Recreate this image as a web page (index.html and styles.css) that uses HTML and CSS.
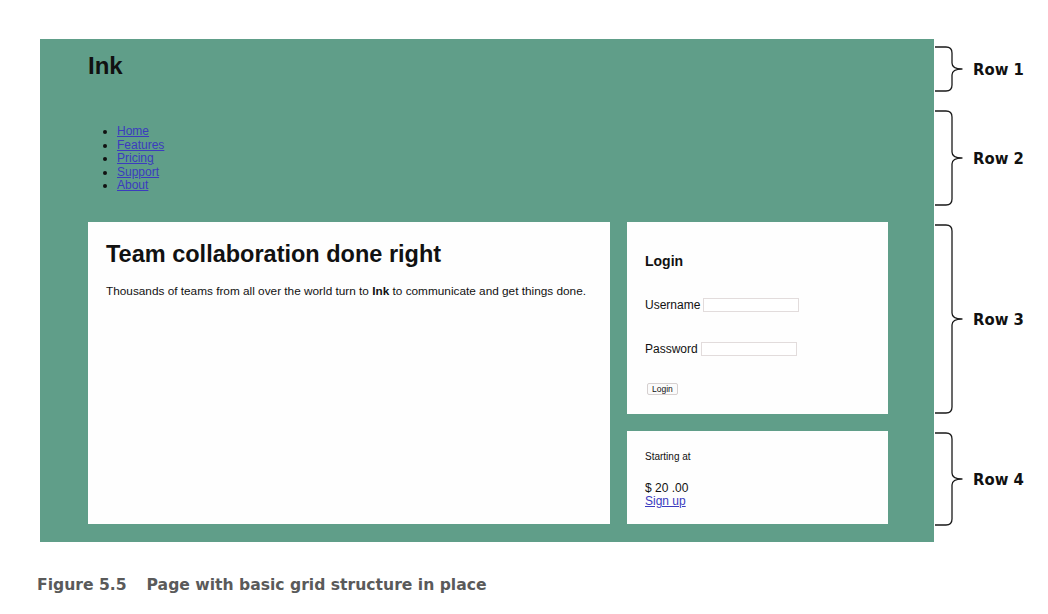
FILE: index.html
```html
<!DOCTYPE html>
<html lang="en">
<head>
<meta charset="utf-8">
<title>Figure 5.5</title>
<link rel="stylesheet" href="styles.css">
</head>
<body>
<div class="figure">
  <div class="stage">
    <div class="site">
      <header class="brand"><h1>Ink</h1></header>
      <nav class="nav">
        <ul>
          <li><a href="#">Home</a></li>
          <li><a href="#">Features</a></li>
          <li><a href="#">Pricing</a></li>
          <li><a href="#">Support</a></li>
          <li><a href="#">About</a></li>
        </ul>
      </nav>
      <main class="card hero">
        <h2>Team collaboration done right</h2>
        <p>Thousands of teams from all over the world turn to <strong>Ink</strong> to communicate and get things done.</p>
      </main>
      <section class="card login">
        <h3>Login</h3>
        <p class="field">Username <input type="text" class="input"></p>
        <p class="field">Password <input type="password" class="input"></p>
        <p class="actions"><button class="btn" type="button">Login</button></p>
      </section>
      <section class="card pricing">
        <p class="small">Starting at</p>
        <p class="price">$ 20 .00</p>
        <a href="#" class="signup">Sign up</a>
      </section>
    </div>
    <div class="notes">
      <div class="note">
        <svg class="brace" width="30" height="46" viewBox="0 0 30 46"><path d="M0 1 H11 Q17 1 17 7 V17 Q17 23 27 23 Q17 23 17 29 V39 Q17 45 11 45 H0"/></svg>
        <span class="label">Row 1</span>
      </div>
      <div class="note">
        <svg class="brace" width="30" height="96" viewBox="0 0 30 96"><path d="M0 1 H11 Q17 1 17 7 V42 Q17 48 27 48 Q17 48 17 54 V89 Q17 95 11 95 H0"/></svg>
        <span class="label">Row 2</span>
      </div>
      <div class="note">
        <svg class="brace" width="30" height="190" viewBox="0 0 30 190"><path d="M0 1 H11 Q17 1 17 7 V89 Q17 95 27 95 Q17 95 17 101 V183 Q17 189 11 189 H0"/></svg>
        <span class="label">Row 3</span>
      </div>
      <div class="note">
        <svg class="brace" width="30" height="94" viewBox="0 0 30 94"><path d="M0 1 H11 Q17 1 17 7 V41 Q17 47 27 47 Q17 47 17 53 V87 Q17 93 11 93 H0"/></svg>
        <span class="label">Row 4</span>
      </div>
    </div>
  </div>
  <p class="caption"><span class="fig-num">Figure 5.5</span>Page with basic grid structure in place</p>
</div>
</body>
</html>
```

FILE: styles.css
```css
html, body {
  margin: 0;
  padding: 0;
  background: #ffffff;
}

body {
  font-family: "Liberation Sans", Arial, sans-serif;
  color: #111111;
}

.figure {
  padding: 39px 0 0 37px;
}

.stage {
  display: flex;
  align-items: flex-start;
  margin-left: 3px;
}

.site {
  box-sizing: border-box;
  width: 894px;
  height: 503px;
  flex: none;
  background: #609e89;
  padding: 0 46px 18px 48px;
  display: grid;
  grid-template-columns: 2fr 1fr;
  grid-template-rows: 53px 96px 192px 93px;
  column-gap: 17px;
  row-gap: 17px;
}

.brand {
  grid-column: 1 / -1;
  display: flex;
  align-items: center;
}

.brand h1 {
  margin: 0;
  font-size: 24px;
  line-height: 28px;
  font-weight: bold;
  color: #111;
}

.nav {
  grid-column: 1 / -1;
  align-self: center;
  padding-top: 4px;
}

.nav ul {
  margin: 0;
  padding-left: 29px;
  list-style: disc;
  font-size: 12px;
  line-height: 13.4px;
}

a {
  color: #3b3bbf;
  text-decoration: underline;
}

.card {
  background: #fefefe;
  box-sizing: border-box;
  padding: 18px;
}

.hero {
  grid-column: 1;
  grid-row: 3 / span 2;
  padding-right: 8px;
}

.hero h2 {
  margin: 0;
  font-size: 23.5px;
  line-height: 28px;
  font-weight: bold;
}

.hero p {
  margin: 16px 0 0;
  font-size: 11.8px;
  line-height: 14px;
  white-space: nowrap;
}

.login {
  grid-column: 2;
  grid-row: 3;
}

.login h3 {
  margin: 13px 0 0;
  font-size: 14px;
  line-height: 16px;
  font-weight: bold;
}

.field {
  margin: 28px 0 0;
  font-size: 12px;
  line-height: 16px;
  display: flex;
  align-items: center;
  gap: 3px;
}

.input {
  box-sizing: border-box;
  width: 96px;
  height: 14px;
  margin: 0;
  padding: 0 2px;
  border: 1px solid #e2dcdc;
  background: #ffffff;
  font-size: 10px;
}

.actions {
  margin: 24px 0 0;
  line-height: 12px;
}

.btn {
  box-sizing: border-box;
  height: 12px;
  padding: 0 4px;
  margin: 0 0 0 2px;
  font-family: "Liberation Sans", Arial, sans-serif;
  font-size: 8.5px;
  line-height: 10px;
  color: #111;
  background: #fbfbfb;
  border: 1px solid #d6d0d0;
  border-radius: 2px;
}

.pricing {
  grid-column: 2;
  grid-row: 4;
  padding-top: 19px;
}

.small {
  margin: 0;
  font-size: 10px;
  line-height: 14px;
}

.price {
  margin: 18px 0 0;
  font-size: 12px;
  line-height: 13px;
}

.signup {
  display: block;
  width: max-content;
  font-size: 12px;
  line-height: 13px;
}

.notes {
  margin-left: 1px;
  padding-top: 7px;
  display: grid;
  grid-template-rows: 46px 96px 190px 94px;
  row-gap: 18px;
}

.note {
  display: flex;
  align-items: center;
}

.brace {
  flex: none;
  display: block;
}

.brace path {
  fill: none;
  stroke: #1a1a1a;
  stroke-width: 1.3;
  stroke-linecap: round;
  stroke-linejoin: round;
}

.label {
  margin-left: 8px;
  font-family: "DejaVu Sans Condensed", "DejaVu Sans", sans-serif;
  font-stretch: condensed;
  font-weight: bold;
  font-size: 16.5px;
  color: #111;
  white-space: nowrap;
}

.caption {
  margin: 33px 0 0;
  font-family: "DejaVu Sans", sans-serif;
  font-weight: bold;
  font-size: 15.6px;
  line-height: 20px;
  color: #5a5a5a;
}

.fig-num {
  margin-right: 20px;
}
```
